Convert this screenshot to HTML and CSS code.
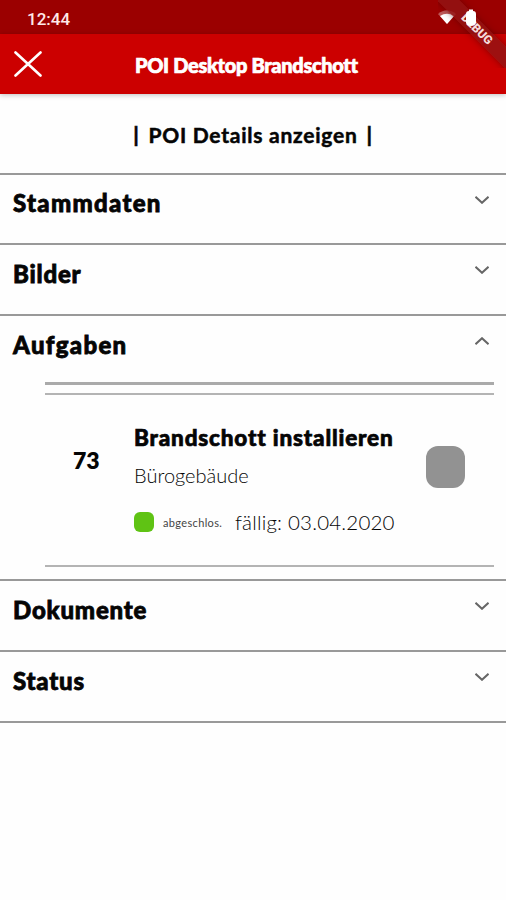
FILE: index.html
```html
<!DOCTYPE html>
<html lang="de">

<head>
    <meta charset="UTF-8">
    <meta name="viewport" content="width=device-width, initial-scale=1.0">
    <title>POI Desktop Brandschott</title>
    <link rel="stylesheet" href="styles.css">
</head>

<body>
    <div class="statusbar">
        <span class="uhrzeit">12:44</span>
        <svg class="wlan" viewBox="0 0 18 14" width="18" height="14">
            <path d="M0 4 Q9 -3.5 18 4 L9 14 Z" fill="#fff" fill-opacity="0.35"/>
            <path d="M2 6 Q9 1.5 16 6 L9 14 Z" fill="#fff"/>
        </svg>
    </div>

    <div class="titelleiste">
        <svg class="schliessen" viewBox="0 0 28 26" width="28" height="26">
            <path d="M1.5 1.5 L26.5 24.5 M26.5 1.5 L1.5 24.5" stroke="#fff" stroke-width="2.6" stroke-linecap="round"/>
        </svg>
        <h1>POI Desktop Brandschott</h1>
    </div>

    <div class="debug"><span>DEBUG</span></div>
    <svg class="akku" viewBox="0 0 10 17" width="10" height="17">
        <path d="M3 2 V0.5 H7 V2 Q10 2 10 5 V14 Q9 17 5 17 Q1 17 0 14 V5 Q0 2 3 2 Z" fill="#fff"/>
    </svg>

    <div class="details"><span>|</span> POI Details anzeigen <span>|</span></div>

    <div class="abschnitt stammdaten">
        <h2>Stammdaten</h2>
        <svg class="pfeil" viewBox="0 0 14 8" width="14" height="8"><path d="M0.5 0.8 L7 6.8 L13.5 0.8"/></svg>
    </div>
    <div class="abschnitt bilder">
        <h2>Bilder</h2>
        <svg class="pfeil" viewBox="0 0 14 8" width="14" height="8"><path d="M0.5 0.8 L7 6.8 L13.5 0.8"/></svg>
    </div>
    <div class="abschnitt aufgaben">
        <h2>Aufgaben</h2>
        <svg class="pfeil" viewBox="0 0 14 8" width="14" height="8"><path d="M0.5 7.2 L7 1.2 L13.5 7.2"/></svg>
    </div>

    <div class="liste">
        <div class="aufgabe">
            <div class="nummer">73</div>
            <div class="info">
                <h3>Brandschott installieren</h3>
                <p class="ort">Bürogebäude</p>
                <div class="status">
                    <span class="punkt"></span>
                    <span class="zustand">abgeschlos.</span>
                    <span class="faellig">fällig: 03.04.2020</span>
                </div>
            </div>
            <div class="auswahl"></div>
        </div>
    </div>

    <div class="abschnitt dokumente">
        <h2>Dokumente</h2>
        <svg class="pfeil" viewBox="0 0 14 8" width="14" height="8"><path d="M0.5 0.8 L7 6.8 L13.5 0.8"/></svg>
    </div>
    <div class="abschnitt stand">
        <h2>Status</h2>
        <svg class="pfeil" viewBox="0 0 14 8" width="14" height="8"><path d="M0.5 0.8 L7 6.8 L13.5 0.8"/></svg>
    </div>
</body>

</html>
```

FILE: styles.css
```css
* {
    box-sizing: border-box;
}

body {
    margin: 0;
    height: 900px;
    position: relative;
    overflow: hidden;
    background-color: #fefefe;
    color: #050505;
    font-family: Lato, "Liberation Sans", sans-serif;
}

h1, h2, h3, p {
    margin: 0;
    white-space: nowrap;
}

.statusbar {
    display: flex;
    justify-content: space-between;
    height: 34px;
    padding: 10px 50px 0 27px;
    background-color: #9b0000;
}

.uhrzeit {
    color: #ffe9e9;
    font: 500 17px/18px Roboto, sans-serif;
}

.titelleiste {
    display: flex;
    height: 60px;
    padding: 17px 0 0 14px;
    background-color: #cc0000;
    box-shadow: 0 1px 5px rgba(0, 0, 0, 0.25);
}

.titelleiste h1 {
    margin-left: 93px;
    color: #fff;
    font-size: 20px;
    line-height: 28px;
    font-weight: 900;
    letter-spacing: -0.32px;
    -webkit-text-stroke: 0.7px #fff;
}

.debug {
    position: absolute;
    top: 0;
    right: 0;
    width: 68px;
    height: 68px;
    overflow: hidden;
}

.debug span {
    position: absolute;
    left: -21px;
    top: 21px;
    width: 120px;
    height: 16px;
    transform: rotate(45deg);
    background-color: rgba(145, 20, 20, 0.8);
    box-shadow: 0 0 6px rgba(70, 0, 0, 0.5);
    color: #f5dada;
    font: 900 12px/16px Roboto, sans-serif;
    text-align: center;
}

.akku {
    position: absolute;
    left: 466px;
    top: 9px;
}

.details {
    height: 79px;
    padding-top: 28px;
    font-size: 21px;
    line-height: 26px;
    font-weight: 700;
    letter-spacing: 0.75px;
    text-align: center;
    white-space: pre;
    -webkit-text-stroke: 0.5px #050505;
}

.details span {
    margin: 0 3px;
    font-weight: 900;
}

.abschnitt {
    display: flex;
    justify-content: space-between;
    height: 71px;
    padding: 13px 17px 0 13px;
    border-top: 2px solid #999;
}

.abschnitt h2 {
    font-size: 24px;
    line-height: 31px;
    font-weight: 900;
    letter-spacing: 0.8px;
    -webkit-text-stroke: 0.8px #050505;
}

.pfeil {
    margin-top: 8px;
    fill: none;
    stroke: #666;
    stroke-width: 2;
}

.stammdaten {
    height: 70px;
}

.stammdaten h2,
.aufgaben h2 {
    letter-spacing: 1.3px;
}

.stammdaten h2 {
    line-height: 29px;
}

.aufgaben {
    height: 68px;
}

.liste {
    margin: 0 12px 0 45px;
    height: 197px;
    padding-top: 8px;
    border-top: 3px solid #aaa;
}

.aufgabe {
    display: flex;
    height: 174px;
    border-top: 2px solid #b4b4b4;
    border-bottom: 2px solid #b4b4b4;
}

.nummer {
    width: 89px;
    padding: 51px 0 0 28px;
    font-size: 23px;
    line-height: 28px;
    font-weight: 800;
}

.info {
    width: 292px;
    padding-top: 29px;
}

.info h3 {
    font-size: 22.5px;
    line-height: 28px;
    font-weight: 900;
    letter-spacing: 0.82px;
    -webkit-text-stroke: 0.7px #050505;
}

.ort {
    margin-top: 9px;
    font-size: 20px;
    line-height: 28px;
    font-weight: 300;
}

.status {
    display: flex;
    align-items: center;
    height: 28px;
    margin-top: 19px;
    white-space: nowrap;
}

.punkt {
    width: 20px;
    height: 20px;
    border-radius: 6px;
    background-color: #5fc314;
}

.zustand {
    width: 72px;
    padding-left: 9px;
    color: #444;
    font-size: 11px;
    letter-spacing: 0.35px;
}

.faellig {
    margin-left: 9px;
    font-size: 20.5px;
    font-weight: 300;
    letter-spacing: 0.2px;
}

.auswahl {
    width: 39px;
    height: 42px;
    margin-top: 51px;
    border-radius: 12px;
    background-color: #929292;
}

.stand {
    height: 73px;
    border-bottom: 2px solid #999;
}
```
